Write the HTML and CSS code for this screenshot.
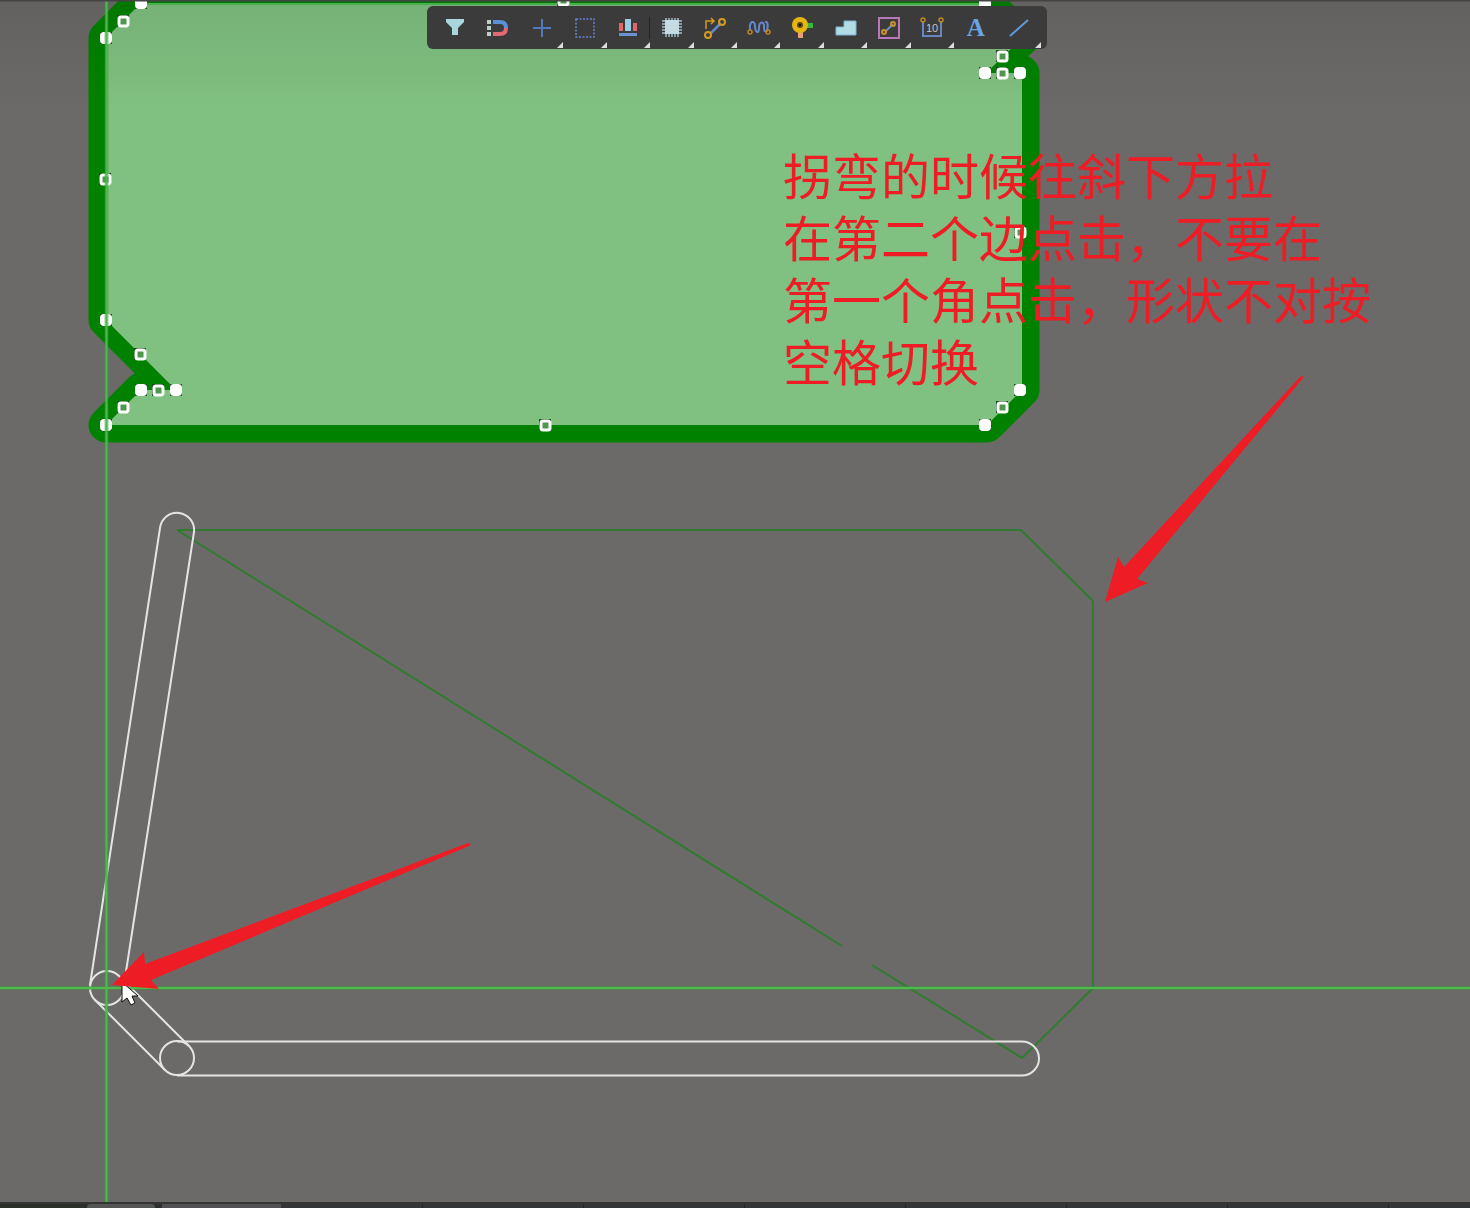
FILE: index.html
```html
<!DOCTYPE html>
<html lang="zh-CN">
<head>
<meta charset="utf-8">
<title>PCB 编辑器</title>
<link rel="stylesheet" href="styles.css">
</head>
<body>
<main class="editor">
  <svg class="board" aria-hidden="true">
    <defs>
      <g id="vertex"><path class="corner" d="M-6-6H6V6H-6z"/><rect class="solid" x="-6" y="-6" width="12" height="12" rx="4"/></g>
      <g id="mid"><path class="corner" d="M-6-6H6V6H-6z"/><rect class="ring" x="-4" y="-4" width="9" height="9" rx="2"/></g>
      <path id="pour" d="M141 3H986L1022 38L986 73H1022V390L987 425H106L141 390H176L106 320V38z"/>
      <linearGradient id="shade" x1="0" y1="0" x2="0" y2="1"><stop offset="0" stop-opacity=".08"/><stop offset="1" stop-opacity="0"/></linearGradient>
    </defs>

    <use href="#pour" class="pour-edge"/>
    <use href="#pour" class="pour-fill"/>
    <path class="pour-top" d="M146 4H980"/>
    <rect width="100%" height="110" fill="url(#shade)"/>

    <path class="outline" d="M177 530H1021L1093 601V988L1022 1058L872 965M842 946L177 530"/>
    <g class="track">
      <path d="M90 985L160 528A17 17 0 0 1 194 532L123 991"/>
      <circle cx="107" cy="988" r="17"/>
      <path d="M95 1000L165 1070M119 976L189 1046"/>
      <circle cx="177" cy="1058" r="17"/>
      <path d="M177 1041.500H1022A17 17 0 0 1 1022 1075.500H177"/>
    </g>

    <use href="#vertex" x="106" y="38"/>
    <use href="#vertex" x="141" y="3"/>
    <use href="#vertex" x="985" y="3"/>
    <use href="#vertex" x="985" y="73"/>
    <use href="#vertex" x="1020" y="73"/>
    <use href="#vertex" x="1020" y="390"/>
    <use href="#vertex" x="985" y="425"/>
    <use href="#vertex" x="106" y="425"/>
    <use href="#vertex" x="141" y="390"/>
    <use href="#vertex" x="176" y="390"/>
    <use href="#vertex" x="106" y="320"/>
    <use href="#mid" x="123" y="21"/>
    <use href="#mid" x="105" y="179"/>
    <use href="#mid" x="140" y="354"/>
    <use href="#mid" x="158" y="390"/>
    <use href="#mid" x="123" y="407"/>
    <use href="#mid" x="545" y="425"/>
    <use href="#mid" x="563" y="0"/>
    <use href="#mid" x="1002" y="407"/>
    <use href="#mid" x="1020" y="232"/>
    <use href="#mid" x="1002" y="73"/>
    <use href="#mid" x="1002" y="56"/>

    <path class="cross-glow" d="M0 988H4000M106.500 0V4000"/>
    <path class="cross" d="M0 988H4000M106.500 0V4000"/>
    <path class="cursor" d="M122 982V1002L127 998L131 1005L135 1003L132 996H138z"/>
    <path class="arrow" d="M470 843Q471 845 469 846L151 980L159 989L112 985L144 952L145 964L468 843z"/>
    <path class="arrow" d="M1302 376Q1304 376 1303 378L1137 579L1148 583L1105 602L1118 557L1124 567L1300 377z"/>
    <path class="top-edge" d="M0 0H4000"/>
  </svg>

  <header class="bar">
    <div class="tools" role="toolbar" aria-label="工具">
      <button class="tool" aria-label="过滤"><svg viewBox="0 0 24 24"><path fill="#a9d5df" d="M3 3H21V6L15 12V19H9V12L3 6z"/></svg></button>
      <button class="tool" aria-label="捕捉"><svg viewBox="0 0 24 24" fill="none" stroke-width="4"><path stroke="#b9cfc9" stroke-dasharray="4 2" d="M3 4V20"/><path stroke="#5b8fd6" d="M7 6H14Q20 6 20 12"/><path stroke="#e26a70" d="M20 12Q20 18 14 18H7"/></svg></button>
      <button class="tool more" aria-label="移动"><svg viewBox="0 0 24 24" fill="none" stroke="#5478bd" stroke-width="2"><path d="M12 3V21M3 12H21M11 4H13M11 20H13M4 11V13M20 11V13"/></svg></button>
      <button class="tool more" aria-label="选择"><svg viewBox="0 0 24 24"><path fill="none" stroke="#6184cf" stroke-width="1.500" stroke-dasharray="2 1.500" d="M3 3H21V21H3z"/></svg></button>
      <button class="tool more divided" aria-label="对齐"><svg viewBox="0 0 24 24"><path fill="#9bcbe0" d="M9 3H15V15H9z"/><path fill="#df6664" d="M3 7H7V15H3zM17 7H21V15H17z"/><path fill="#6b93cf" d="M3 17H21V20H3z"/></svg></button>
      <button class="tool more" aria-label="元件"><svg viewBox="0 0 24 24"><path stroke="#a4bdc9" stroke-width="1.500" d="M6 2V21M9 2V21M12 2V21M15 2V21M18 2V21M2 5H22M2 8H22M2 11H22M2 14H22M2 17H22"/><path fill="#c5dbe2" d="M5 4H19V18H5z"/></svg></button>
      <button class="tool more" aria-label="布线"><svg viewBox="0 0 24 24" fill="none" stroke="#d59a20" stroke-width="2"><path stroke="#6287c9" stroke-width="2.500" d="M7 18L18 7"/><circle cx="5" cy="19" r="3"/><circle cx="19" cy="6" r="3"/><path stroke-width="1.500" d="M3 13V5H11M8 2L11 5L8 8"/></svg></button>
      <button class="tool more" aria-label="等长"><svg viewBox="0 0 24 24" fill="none"><path stroke="#6389cc" stroke-width="2" d="M3 14C2 4 8 4 8 10S12 19 12 12S17 5 17 10S17 16 20 15Q22 5 18 6"/><g stroke="#bb831e" stroke-width="1.500"><circle cx="3" cy="16" r="2"/><circle cx="21" cy="16" r="2"/></g></svg></button>
      <button class="tool more" aria-label="过孔"><svg viewBox="0 0 24 24"><path fill="#38b83b" d="M15 7H23V12H15z"/><path fill="#e3a079" d="M8 14H13V22H8z"/><circle cx="10" cy="9" r="8" fill="#e7b512"/><circle cx="10" cy="9" r="2" stroke="#59470b" stroke-width="2"/></svg></button>
      <button class="tool more" aria-label="铺铜"><svg viewBox="0 0 24 24"><path fill="#b2dce5" stroke="#82b6d0" d="M2 19V11H10V5H22V19z"/></svg></button>
      <button class="tool more" aria-label="禁布区"><svg viewBox="0 0 24 24" fill="none" stroke-width="2"><path stroke="#b978b8" d="M2 2H22V22H2z"/><path stroke="#6c92bc" d="M8 16L16 8"/><g stroke="#c89025"><circle cx="7" cy="16" r="2"/><circle cx="16" cy="8" r="2"/></g></svg></button>
      <button class="tool more" aria-label="尺寸"><svg viewBox="0 0 24 24" fill="none"><path stroke="#6787bd" stroke-width="2" d="M3 5V20H21V5"/><g stroke="#bd8720" stroke-width="1.500"><circle cx="3" cy="4" r="2"/><circle cx="21" cy="4" r="2"/></g><text class="digits" x="12" y="16">10</text></svg></button>
      <button class="tool letter" aria-label="文本">A</button>
      <button class="tool more" aria-label="直线"><svg viewBox="0 0 24 24"><path stroke="#6099da" stroke-width="2" d="M3 20L21 4"/></svg></button>
    </div>
  </header>

  <p class="note">拐弯的时候往斜下方拉<br>在第二个边点击，不要在<br>第一个角点击，形状不对按<br>空格切换</p>
</main>
<footer class="layers"><i class="gap"></i><i class="tab"></i><i class="gap small"></i><i class="tab wide"></i><i class="cell first"></i><i class="cell"></i><i class="cell"></i><i class="cell"></i><i class="cell"></i><i class="cell"></i><i class="cell"></i></footer>
</body>
</html>
```
FILE: styles.css
```css
* { box-sizing: border-box; }

body {
  margin: 0;
  min-height: 100vh;
  display: flex;
  flex-direction: column;
  background: #6c6a68;
  font-family: "Noto Sans CJK SC", sans-serif;
}

.editor {
  position: relative;
  flex: 1;
  overflow: hidden;
}

/* drawing area */
.board {
  position: absolute;
  inset: 0;
  width: 100%;
  height: 100%;
}
.pour-edge { fill: none; stroke: #008200; stroke-width: 35px; stroke-linejoin: round; }
.pour-fill { fill: #80c080; }
.pour-top { stroke: #4fbe57; stroke-width: 2px; }
.corner { fill: #174f17; }
.solid { fill: #fff; }
.ring { fill: #4f974f; stroke: #fff; stroke-width: 3px; }
.outline { fill: none; stroke: #2f7b2f; stroke-width: 2px; }
.track { fill: none; stroke: #e4e4e2; stroke-width: 2px; }
.cross { stroke: #52b852; stroke-width: 2px; }
.cross-glow { stroke: #30a030; stroke-width: 4px; opacity: .5; }
.cursor { fill: #fff; stroke: #111; stroke-width: 1px; }
.arrow { fill: #ee1c24; }
.top-edge { stroke: #444343; stroke-width: 3px; }

/* floating toolbar */
.bar {
  position: relative;
  display: flex;
  justify-content: center;
  padding: 6px 0 0 4px;
}
.tools {
  display: grid;
  grid-template-columns: repeat(14, 1fr);
  width: 620px;
  height: 43px;
  padding: 0 6px;
  border-radius: 6px;
  background: #3c3b3c;
}
.tool {
  position: relative;
  display: flex;
  align-items: center;
  justify-content: center;
  padding: 0;
  border: 0;
  background: none;
}
.tool svg { width: 24px; height: 24px; }
.more::after {
  content: "";
  position: absolute;
  right: 0;
  bottom: 1px;
  border: 3px solid transparent;
  border-right-color: #ddd;
  border-bottom-color: #ddd;
}
.divided::before {
  content: "";
  position: absolute;
  right: 0;
  top: 11px;
  height: 22px;
  border-right: 1px solid #252525;
}
.letter {
  color: #6ba2e0;
  font: bold 25px "Liberation Serif", serif;
}
.digits {
  fill: #c4c4c4;
  font: 11px "Liberation Sans", sans-serif;
  text-anchor: middle;
}

.note {
  position: absolute;
  left: 783px;
  top: 143px;
  margin: 0;
  color: #ee1c24;
  font-size: 49px;
  line-height: 62px;
  white-space: nowrap;
}

/* layer tabs along the lower edge */
.layers {
  display: flex;
  height: 6px;
  overflow: hidden;
  border-top: 2px solid #353535;
  background: #343536;
}
.layers > * { flex: none; }
.gap { width: 87px; background: #2b302b; }
.small { width: 7px; }
.tab { width: 68px; background: #555; border-radius: 4px 4px 0 0; }
.wide { width: 119px; border-radius: 0; background: #505052; }
.cell { width: 161px; border-right: 1px solid #242424; }
.first { width: 142px; }
```
